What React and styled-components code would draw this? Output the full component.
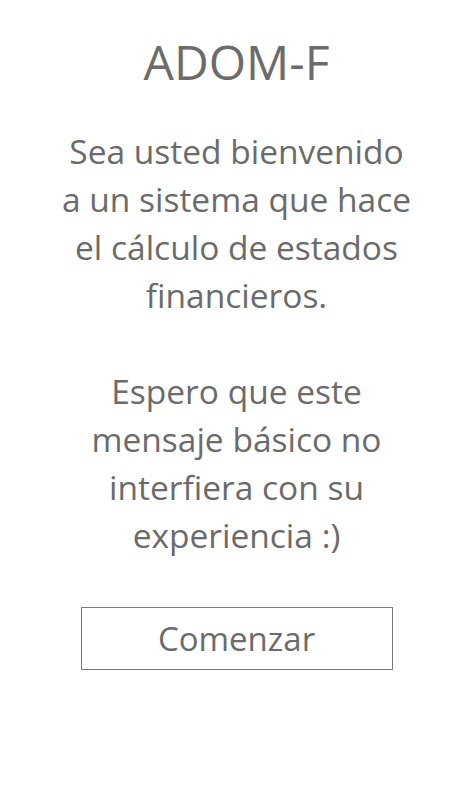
import React from "react";
import styled, { createGlobalStyle } from "styled-components";

const Global = createGlobalStyle`
  html, body { margin: 0; padding: 0; background: #fff; }
  body { font-family: "Open Sans", "Noto Sans", sans-serif; color: #6b6b6b; }
`;

const Page = styled.main`
  width: 473px;
  min-height: 812px;
  display: flex;
  flex-direction: column;
  align-items: center;
  padding-top: 32px;
  box-sizing: border-box;
`;

const Title = styled.h1`
  margin: 0;
  font-size: 48px;
  font-weight: 400;
  line-height: 60px;
`;

const Message = styled.p`
  margin: 35px 0 0;
  text-align: center;
  font-size: 33.5px;
  font-weight: 400;
  line-height: 48px;
`;

const Start = styled.button`
  margin-top: 48px;
  width: 312px;
  height: 63px;
  background: #fff;
  border: 1px solid #7a7a7a;
  color: #6b6b6b;
  font-family: inherit;
  font-size: 33px;
  font-weight: 400;
  cursor: pointer;
  padding: 0;
`;

export default function App() {
  return (
    <>
      <Global />
      <Page>
        <Title>ADOM-F</Title>
        <Message>
          Sea usted bienvenido<br />
          a un sistema que hace<br />
          el cálculo de estados<br />
          financieros.<br />
          <br />
          Espero que este<br />
          mensaje básico no<br />
          interfiera con su<br />
          experiencia :)
        </Message>
        <Start>Comenzar</Start>
      </Page>
    </>
  );
}
